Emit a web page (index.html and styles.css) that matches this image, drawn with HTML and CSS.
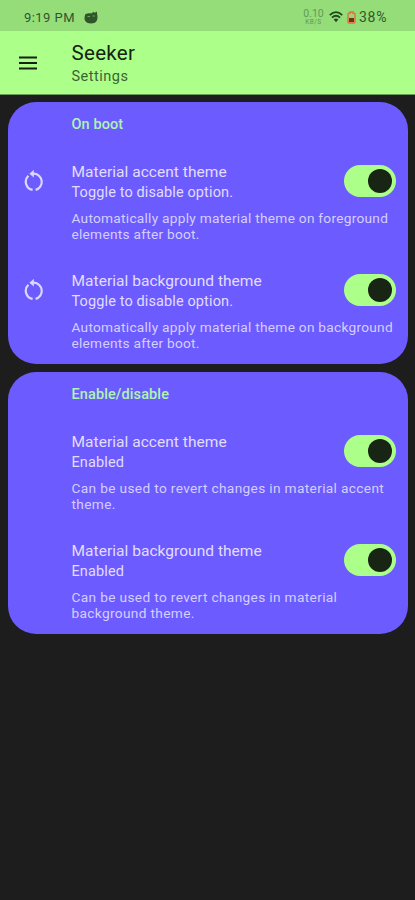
FILE: index.html
```html
<!DOCTYPE html>
<html lang="en">
<head>
<meta charset="utf-8">
<title>Seeker Settings</title>
<link rel="stylesheet" href="styles.css">
</head>
<body>
<div class="status">
  <span class="time">9:19 PM</span>
  <svg class="cat" viewBox="0 0 14 13"><path d="M1.200 3.200 4 2.200 8 2.200 9.200.8 10.800 1.800 12.800.6 13.400 5C14 9.500 12 12.500 7 12.500 2 12.500 0 9.500.6 6Z" fill="#30552a"/><path d="M3.500 5.500h2.500M8.500 5h2.500" stroke="#6ea45c" stroke-width="1"/></svg>
  <span class="rate"><b>0.10</b><i>KB/S</i></span>
  <svg class="wifi" viewBox="0 0 14 12"><g fill="none" stroke="#21481f" stroke-width="1.700"><path d="M.7 4.200Q7-1.800 13.300 4.200"/><path d="M2.900 6.700Q7 2.800 11.100 6.700"/></g><path d="M4.700 8.500Q7 6.500 9.300 8.500L7 11.200Z" fill="#21481f"/></svg>
  <svg class="battery" viewBox="0 0 9 13"><path d="M3 1h3v1.200h1.200q.8 0 .8.800v8q0 1-1 1H2q-1 0-1-1V3q0-.8.800-.8H3Z" fill="#9bd374" stroke="#ee6b3c" stroke-width="1.400"/><path d="M2 7h5v4H2Z" fill="#5d3a1c"/></svg>
  <span class="percent">38%</span>
</div>
<header class="bar">
  <svg class="menu" viewBox="0 0 18 14"><path d="M0 1.500h18M0 7h18M0 12.500h18" stroke="#142312" stroke-width="1.900"/></svg>
  <div class="heading"><h1>Seeker</h1><p>Settings</p></div>
</header>
<main>
  <section class="card">
    <h2>On boot</h2>
    <div class="row">
      <svg class="reset" viewBox="0 0 20 22"><g fill="none" stroke="#dcd7ff" stroke-width="2.200"><path d="M8.600 19.900A8.300 8.300 0 0 1 4.400 5.700"/><path d="M8 3.600h2a8.300 8.300 0 0 1 1.600 16.300"/></g><path d="M9.800-.1v7.600L5.400 3.700Z" fill="#dcd7ff"/></svg>
      <div class="copy"><h3>Material accent theme</h3><p class="sub">Toggle to disable option.</p><p class="desc">Automatically apply material theme on foreground<br>elements after boot.</p></div>
      <span class="switch"></span>
    </div>
    <div class="row">
      <svg class="reset" viewBox="0 0 20 22"><g fill="none" stroke="#dcd7ff" stroke-width="2.200"><path d="M8.600 19.900A8.300 8.300 0 0 1 4.400 5.700"/><path d="M8 3.600h2a8.300 8.300 0 0 1 1.600 16.300"/></g><path d="M9.800-.1v7.600L5.400 3.700Z" fill="#dcd7ff"/></svg>
      <div class="copy"><h3>Material background theme</h3><p class="sub">Toggle to disable option.</p><p class="desc">Automatically apply material theme on background<br>elements after boot.</p></div>
      <span class="switch"></span>
    </div>
  </section>
  <section class="card">
    <h2>Enable/disable</h2>
    <div class="row">
      <div class="copy"><h3>Material accent theme</h3><p class="sub">Enabled</p><p class="desc wide">Can be used to revert changes in material accent<br>theme.</p></div>
      <span class="switch"></span>
    </div>
    <div class="row">
      <div class="copy"><h3>Material background theme</h3><p class="sub">Enabled</p><p class="desc wide">Can be used to revert changes in material<br>background theme.</p></div>
      <span class="switch"></span>
    </div>
  </section>
</main>
</body>
</html>
```
FILE: styles.css
```css
* { box-sizing: border-box; }
body, h1, h2, h3, p { margin: 0; font-weight: 400; }
body { height: 900px; background: #1d1d1e; font-family: Roboto, sans-serif; overflow: hidden; white-space: nowrap; }
svg { display: block; flex: none; }
.status { display: flex; align-items: center; height: 31px; padding: 3px 25px 0 24px; background: #95dd79; color: #32562c; font-size: 13px; }
.time { letter-spacing: .45px; width: 60px; }
.cat { width: 14px; height: 13px; }
.rate { margin-left: auto; width: 21px; text-align: center; color: #62985a; margin-right: 5px; }
.rate b, .rate i { display: block; font-style: normal; font-weight: 400; }
.rate b { font-size: 10.500px; line-height: 10px; }
.rate i { font-size: 6.500px; line-height: 7px; letter-spacing: .4px; }
.wifi { width: 14px; height: 12px; margin-right: 4px; }
.battery { width: 9px; height: 13px; margin-right: 3px; }
.percent { width: 31px; font-size: 14px; letter-spacing: .7px; }
.bar { display: flex; height: 64px; padding-left: 19px; background: #acff89; border-bottom: 1px solid #6b9a5b; color: #142312; }
.menu { width: 18px; height: 14px; margin: 25px 34px 0 0; }
.heading { padding: 10px 0 0 .5px; }
h1 { font-size: 20.500px; line-height: 25px; letter-spacing: .3px; }
.heading p { font-size: 14.500px; line-height: 22px; letter-spacing: .5px; color: #3d6334; }
main { display: grid; gap: 8px; padding: 6.500px 7px 0 8px; }
.card { height: 262px; border-radius: 28px; background: #6c5bff; color: #e2ddff; }
h2 { padding: 13.500px 0 0 63.500px; height: 60.500px; font-size: 14.500px; line-height: 20px; font-weight: 500; letter-spacing: .1px; color: #aef5b0; }
.row { display: grid; grid-template-columns: 63px 273px 52px; height: 109.300px; }
.reset { width: 20px; height: 22px; margin: 8px 0 0 16px; grid-column: 1; }
.copy { grid-column: 2; padding-left: .5px; }
h3 { font-size: 15.500px; line-height: 20px; letter-spacing: .04px; }
.sub { font-size: 14.500px; line-height: 21px; letter-spacing: .12px; }
.desc { margin-top: 6.500px; font-size: 13.700px; line-height: 16.400px; letter-spacing: .26px; color: #d5cfff; }
.wide { letter-spacing: .34px; }
.switch { grid-column: 3; width: 52px; height: 32px; margin-top: 3px; padding: 4px 4px 0 24px; border-radius: 16px; background: #acff89; }
.switch::before { content: ""; display: block; width: 24px; height: 24px; border-radius: 50%; background: #192514; }
```
